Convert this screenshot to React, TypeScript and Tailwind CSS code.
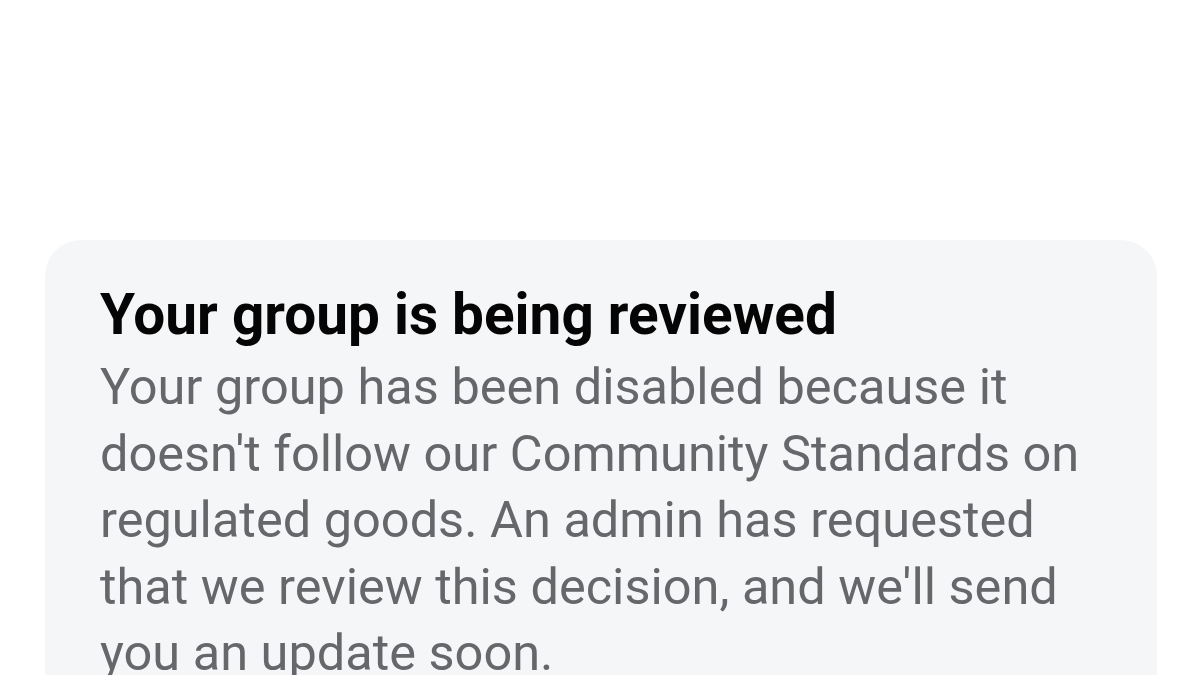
export default function App(){
  return (
    <div className="h-[675px] w-[1200px] overflow-hidden bg-white font-['Roboto',sans-serif]">
      <div className="h-[240px]" />
      <section className="ml-[45px] w-[1112px] rounded-[36px] bg-[#f5f6f8] pl-[55px] pr-[36px] pt-[42px] pb-10">
        <h2 className="text-[56.7px] font-bold leading-[66px] text-[#050505]">Your group is being reviewed</h2>
        <p className="mt-[6px] text-[50.5px] leading-[66.5px] text-[#65676b]">
          Your group has been disabled because it doesn't follow our Community Standards on regulated goods. An admin has requested that we review this decision, and we'll send you an update soon.
        </p>
      </section>
    </div>
  );
}
